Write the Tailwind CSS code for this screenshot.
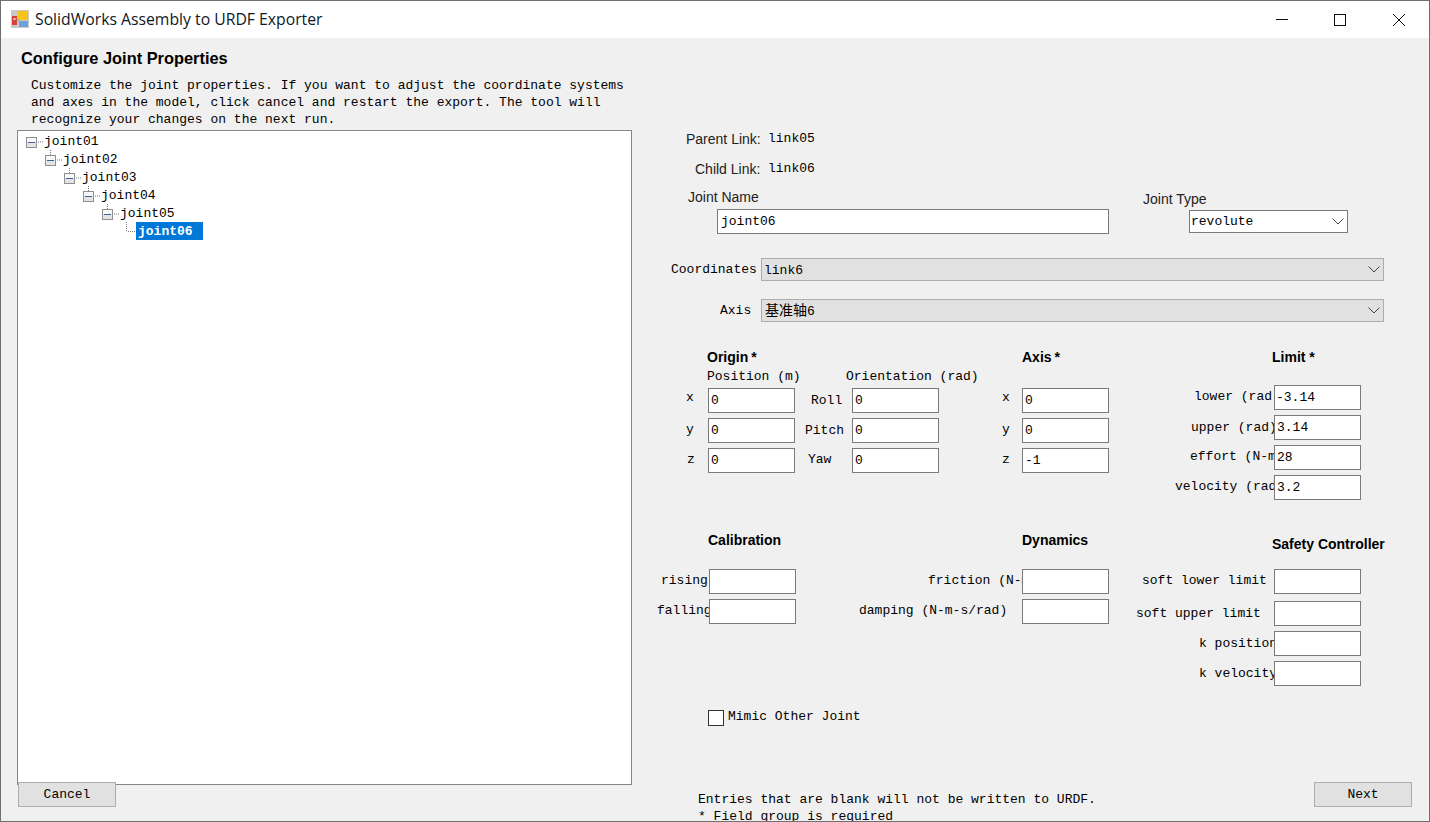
<!DOCTYPE html>
<html lang="en">
<head>
  <meta charset="UTF-8">
  <title>SolidWorks Assembly to URDF Exporter</title>
  <script src="https://cdn.jsdelivr.net/npm/@tailwindcss/browser@4"></script>
</head>
<body class="bg-[#f0f0f0]">
  <svg class="hidden">
    <symbol id="exp" viewBox="0 0 18 18">
      <rect x="0.5" y="5.5" width="10" height="10" fill="#e4e4e4" stroke="#8f8f8f"/>
      <rect x="1" y="6" width="9" height="4" fill="#f8f8f8"/>
      <rect x="2" y="10" width="7" height="1" fill="#3f5f9f"/>
      <path d="M12 10h1M14 10h1M16 10h1" stroke="#777"/>
    </symbol>
  </svg>

  <!-- Ventana -->
  <div class="w-[1430px] h-[822px] border border-[#6f6f6f] overflow-hidden font-['Liberation_Mono','Noto_Sans_CJK_SC',monospace] text-[13px] text-black">

    <!-- Barra de titulo -->
    <div class="h-[37px] bg-white flex items-center relative">
      <svg class="ml-[10px] mt-[-1px] w-[18px] h-[18px]" viewBox="0 0 18 18">
        <rect width="18" height="18" fill="#c9c9c9"/>
        <rect x="1" y="6" width="5" height="9" fill="#d8403c"/>
        <rect x="2.5" y="8" width="2" height="2" fill="#f5d0c8"/>
        <rect x="7" y="1" width="10" height="9" fill="#f6c21c"/>
        <rect x="8" y="11" width="9" height="6" fill="#6f9fdc"/>
        <path d="M5 10h3" stroke="#888"/>
      </svg>
      <span class="ml-[6px] font-['Open_Sans',sans-serif] text-[15.75px] text-[#101828]">SolidWorks Assembly to URDF Exporter</span>
      <svg class="ml-auto mr-[24px] w-[130px] h-[14px]" viewBox="0 0 130 14" fill="none" stroke="#111">
        <path d="M1 6.5h12"/>
        <rect x="59.5" y="1.5" width="11" height="11"/>
        <path d="M118 1l12 12M130 1l-12 12"/>
      </svg>
    </div>

    <div class="flex">
      <!-- Columna izquierda -->
      <div class="w-[639px] pl-[16px]">
        <h1 class="mt-[10px] ml-[4px] h-[20px] leading-[20px] font-['Liberation_Sans',sans-serif] font-bold text-[16.4px]">Configure Joint Properties</h1>
        <p class="mt-[9px] pl-[14px] leading-[17px] whitespace-pre">Customize the joint properties. If you want to adjust the coordinate systems
and axes in the model, click cancel and restart the export. The tool will
recognize your changes on the next run.</p>
        <!-- Arbol de joints -->
        <div class="mt-[2px] w-[615px] h-[655px] bg-white border border-[#82878f] pt-px leading-[20px]">
          <div class="h-[18px] flex pl-[8px]"><svg class="w-[18px] h-[18px]"><use href="#exp"/></svg>joint01</div>
          <div class="h-[18px] flex pl-[27px]"><svg class="w-[18px] h-[18px]"><path d="M5.5 0v1M5.5 2v1M5.5 4v1" stroke="#777"/><use href="#exp"/></svg>joint02</div>
          <div class="h-[18px] flex pl-[46px]"><svg class="w-[18px] h-[18px]"><path d="M5.5 0v1M5.5 2v1M5.5 4v1" stroke="#777"/><use href="#exp"/></svg>joint03</div>
          <div class="h-[18px] flex pl-[65px]"><svg class="w-[18px] h-[18px]"><path d="M5.5 0v1M5.5 2v1M5.5 4v1" stroke="#777"/><use href="#exp"/></svg>joint04</div>
          <div class="h-[18px] flex pl-[84px]"><svg class="w-[18px] h-[18px]"><path d="M5.5 0v1M5.5 2v1M5.5 4v1" stroke="#777"/><use href="#exp"/></svg>joint05</div>
          <div class="h-[18px] flex pl-[108px]">
            <svg class="w-[10px] h-[18px]"><path d="M0.5 0v1M0.5 2v1M0.5 4v1M0.5 6v1M0.5 8v1M2 9.5h1M4 9.5h1M6 9.5h1M8 9.5h1" stroke="#777"/></svg>
            <span class="w-[67px] pl-[2px] bg-[#0078d7] text-white font-bold">joint06</span>
          </div>
        </div>
        <button class="relative block -mt-[3px] ml-[1px] w-[98px] h-[25px] pt-px bg-[#e1e1e1] border border-[#adadad]">Cancel</button>
      </div>

      <!-- Columna derecha -->
      <div class="w-[789px]">
        <div class="mt-[91px] h-[20px] leading-[20px] flex">
          <span class="ml-[46px] w-[82px] font-['Liberation_Sans',sans-serif] text-[14px] text-[#222]">Parent Link:</span><span>link05</span>
        </div>
        <div class="mt-[10px] h-[20px] leading-[20px] flex">
          <span class="ml-[55px] w-[73px] font-['Liberation_Sans',sans-serif] text-[14px] text-[#222]">Child Link:</span><span>link06</span>
        </div>

        <div class="mt-[8px] flex items-start">
          <div class="w-[469px]">
            <div class="pl-[48px] h-[22px] leading-[21px] font-['Liberation_Sans',sans-serif] text-[14px] text-[#222]">Joint Name</div>
            <input class="block ml-[77px] w-[392px] h-[25px] bg-white border border-[#7a7a7a] pl-[3px]" value="joint06">
          </div>
          <div class="pl-[34px] pt-[2px]">
            <div class="h-[21px] leading-[20px] font-['Liberation_Sans',sans-serif] text-[14px] text-[#222]">Joint Type</div>
            <div class="ml-[46px] w-[159px] h-[23px] bg-white border border-[#7a7a7a] pl-[1px] flex items-center justify-between">revolute
              <svg class="mr-[3px] w-[12px] h-[7px]" viewBox="0 0 12 7" fill="none" stroke="#444"><path d="M0.5 0.5l5.5 5.5 5.5-5.5"/></svg>
            </div>
          </div>
        </div>

        <div class="mt-[24px] flex items-center h-[23px]">
          <span class="w-[121px] pl-[31px]">Coordinates</span>
          <div class="w-[623px] h-[23px] bg-[#e1e1e1] border border-[#adadad] pl-[2px] flex items-center justify-between"><span class="pt-[2px]">link6</span>
            <svg class="mr-[3px] w-[12px] h-[7px]" viewBox="0 0 12 7" fill="none" stroke="#444"><path d="M0.5 0.5l5.5 5.5 5.5-5.5"/></svg>
          </div>
        </div>
        <div class="mt-[18px] flex items-center h-[23px]">
          <span class="w-[121px] pl-[80px]">Axis</span>
          <div class="w-[623px] h-[23px] bg-[#e1e1e1] border border-[#adadad] pl-[3px] flex items-center justify-between"><span class="pt-[2px]"><span class="text-[14px]">基准轴</span>6</span>
            <svg class="mr-[3px] w-[12px] h-[7px]" viewBox="0 0 12 7" fill="none" stroke="#444"><path d="M0.5 0.5l5.5 5.5 5.5-5.5"/></svg>
          </div>
        </div>

        <!-- Origin / Axis / Limit -->
        <div class="mt-[25px] h-[20px] leading-[20px] flex font-['Liberation_Sans',sans-serif] font-bold text-[14px]">
          <span class="w-[382px] pl-[67px]">Origin <span class="-ml-[1px]">*</span></span>
          <span class="w-[250px]">Axis <span class="-ml-[1px]">*</span></span>
          <span>Limit *</span>
        </div>
        <div class="flex items-start">
          <div class="w-[469px]">
            <div class="h-[21px] leading-[19px] flex">
              <span class="w-[206px] pl-[67px]">Position (m)</span>
              <span>Orientation (rad)</span>
            </div>
            <div class="flex flex-col gap-[5px]">
              <div class="flex items-center h-[25px]">
                <span class="w-[68px] pl-[46px] pb-[6px]">x</span>
                <input class="w-[87px] h-[25px] bg-white border border-[#7a7a7a] pl-[2px]" value="0">
                <span class="w-[57px] pl-[16px]">Roll</span>
                <input class="w-[87px] h-[25px] bg-white border border-[#7a7a7a] pl-[2px]" value="0">
                <span class="w-[83px] pl-[63px] pb-[6px]">x</span>
                <input class="w-[87px] h-[25px] bg-white border border-[#7a7a7a] pl-[2px]" value="0">
              </div>
              <div class="flex items-center h-[25px]">
                <span class="w-[68px] pl-[46px] pb-[2px]">y</span>
                <input class="w-[87px] h-[25px] bg-white border border-[#7a7a7a] pl-[2px]" value="0">
                <span class="w-[57px] pl-[10px]">Pitch</span>
                <input class="w-[87px] h-[25px] bg-white border border-[#7a7a7a] pl-[2px]" value="0">
                <span class="w-[83px] pl-[63px] pb-[2px]">y</span>
                <input class="w-[87px] h-[25px] bg-white border border-[#7a7a7a] pl-[2px]" value="0">
              </div>
              <div class="flex items-center h-[25px]">
                <span class="w-[68px] pl-[47px] pb-[2px]">z</span>
                <input class="w-[87px] h-[25px] bg-white border border-[#7a7a7a] pl-[2px]" value="0">
                <span class="w-[57px] pl-[13px] pb-[2px]">Yaw</span>
                <input class="w-[87px] h-[25px] bg-white border border-[#7a7a7a] pl-[2px]" value="0">
                <span class="w-[83px] pl-[63px] pb-[2px]">z</span>
                <input class="w-[87px] h-[25px] bg-white border border-[#7a7a7a] pl-[2px]" value="-1">
              </div>
            </div>
          </div>
          <div class="mt-[18px] flex flex-col gap-[5px]">
            <div class="flex items-center h-[25px]">
              <span class="w-[165px] pl-[85px] pb-[2px] overflow-hidden whitespace-nowrap">lower (rad)</span>
              <input class="w-[87px] h-[25px] bg-white border border-[#7a7a7a] pl-[1px]" value="-3.14">
            </div>
            <div class="flex items-center h-[25px]">
              <span class="w-[165px] pl-[82px] overflow-hidden whitespace-nowrap">upper (rad)</span>
              <input class="w-[87px] h-[25px] bg-white border border-[#7a7a7a] pl-[2px]" value="3.14">
            </div>
            <div class="flex items-center h-[25px]">
              <span class="w-[165px] pl-[81px] pb-[2px] overflow-hidden whitespace-nowrap">effort (N-m)</span>
              <input class="w-[87px] h-[25px] bg-white border border-[#7a7a7a] pl-[2px]" value="28">
            </div>
            <div class="flex items-center h-[25px]">
              <span class="w-[165px] pl-[66px] pb-[2px] overflow-hidden whitespace-nowrap">velocity (rad/s)</span>
              <input class="w-[87px] h-[25px] bg-white border border-[#7a7a7a] pl-[2px]" value="3.2">
            </div>
          </div>
        </div>

        <!-- Calibration / Dynamics / Safety Controller -->
        <div class="mt-[30px] h-[20px] leading-[21px] flex font-['Liberation_Sans',sans-serif] font-bold text-[14px]">
          <span class="w-[382px] pl-[68px]">Calibration</span>
          <span class="w-[250px]">Dynamics</span>
          <span class="pt-[4px]">Safety Controller</span>
        </div>
        <div class="mt-[19px] flex items-start">
          <div class="w-[469px] flex flex-col gap-[5px]">
            <div class="flex items-center h-[25px]">
              <span class="w-[69px] pl-[21px] pb-[2px] overflow-hidden whitespace-nowrap">rising</span>
              <input class="w-[87px] h-[25px] bg-white border border-[#7a7a7a]">
              <span class="w-[226px] pl-[132px] pb-[2px] overflow-hidden whitespace-nowrap">friction (N-m)</span>
              <input class="w-[87px] h-[25px] bg-white border border-[#7a7a7a]">
            </div>
            <div class="flex items-center h-[25px]">
              <span class="w-[69px] pl-[17px] pb-[2px] overflow-hidden whitespace-nowrap">falling</span>
              <input class="w-[87px] h-[25px] bg-white border border-[#7a7a7a]">
              <span class="w-[226px] pl-[63px] pb-[2px] overflow-hidden whitespace-nowrap">damping (N-m-s/rad)</span>
              <input class="w-[87px] h-[25px] bg-white border border-[#7a7a7a]">
            </div>
          </div>
          <div class="flex flex-col">
            <div class="flex items-center h-[25px]">
              <span class="w-[165px] pl-[33px] pb-[2px] overflow-hidden whitespace-nowrap">soft lower limit</span>
              <input class="w-[87px] h-[25px] bg-white border border-[#7a7a7a]">
            </div>
            <div class="mt-[7px] flex items-center h-[25px]">
              <span class="w-[165px] pl-[27px] overflow-hidden whitespace-nowrap">soft upper limit</span>
              <input class="w-[87px] h-[25px] bg-white border border-[#7a7a7a]">
            </div>
            <div class="mt-[5px] flex items-center h-[25px]">
              <span class="w-[165px] pl-[90px] overflow-hidden whitespace-nowrap">k position</span>
              <input class="w-[87px] h-[25px] bg-white border border-[#7a7a7a]">
            </div>
            <div class="mt-[5px] flex items-center h-[25px]">
              <span class="w-[165px] pl-[90px] overflow-hidden whitespace-nowrap">k velocity</span>
              <input class="w-[87px] h-[25px] bg-white border border-[#7a7a7a]">
            </div>
          </div>
        </div>

        <div class="mt-[23px] ml-[68px] h-[17px] flex items-center">
          <span class="w-[16px] h-[16px] bg-white border border-[#333]"></span>
          <span class="ml-[4px] pb-[2px]">Mimic Other Joint</span>
        </div>

        <!-- Pie -->
        <div class="mt-[56px] flex items-start">
          <p class="w-[674px] pl-[58px] pt-[9px] leading-[17px]">Entries that are blank will not be written to URDF.<br>* Field group is required</p>
          <button class="w-[98px] h-[25px] bg-[#e1e1e1] border border-[#adadad]">Next</button>
        </div>
      </div>
    </div>
  </div>
</body>
</html>
